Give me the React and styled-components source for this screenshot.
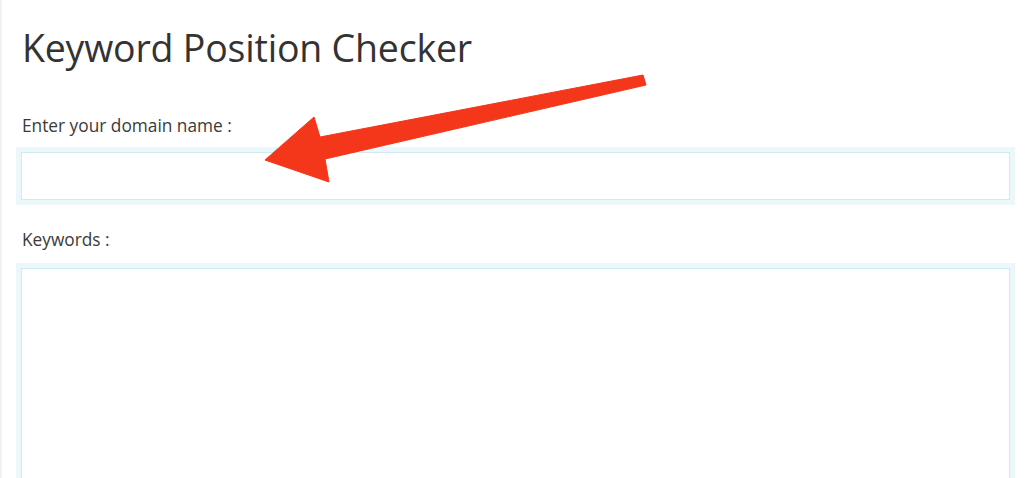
import React from "react";
import styled, { createGlobalStyle } from "styled-components";

const GlobalStyle = createGlobalStyle`
  html, body {
    margin: 0;
    padding: 0;
    background: #fff;
  }
  body {
    font-family: "Open Sans", "Liberation Sans", sans-serif;
    color: #333;
    overflow: hidden;
  }
`;

const Page = styled.div`
  position: relative;
  height: 478px;
  overflow: hidden;
  border-left: 2px solid #f1f1f1;
  padding: 0 19px;
  box-sizing: border-box;
`;

const Title = styled.h1`
  margin: 0;
  padding: 23px 0 0 1px;
  font-size: 37.5px;
  font-weight: 400;
  line-height: 50px;
  color: #333;
  letter-spacing: -0.2px;
`;

const Label = styled.label`
  display: block;
  margin: ${(p) => p.$top}px 0 0 1px;
  font-size: 17.3px;
  line-height: 24px;
  color: #3a3a3a;
`;

const Field = styled.div`
  margin-top: ${(p) => p.$top}px;
  height: ${(p) => p.$height}px;
  border: 1px solid #cfeaf1;
  box-shadow: 0 0 0 5px #ebf7fb;
  background: #fff;
  box-sizing: border-box;
`;

const TextInput = styled.input`
  display: block;
  width: 100%;
  height: 100%;
  border: 0;
  outline: none;
  padding: 0 10px;
  box-sizing: border-box;
  background: transparent;
  font: inherit;
`;

const TextArea = styled.textarea`
  display: block;
  width: 100%;
  height: 100%;
  border: 0;
  outline: none;
  resize: none;
  padding: 10px;
  box-sizing: border-box;
  background: transparent;
  font: inherit;
`;

const Pointer = styled.svg`
  position: absolute;
  left: 0;
  top: 0;
  pointer-events: none;
`;

export default function App() {
  return (
    <>
      <GlobalStyle />
      <Page>
        <Title>Keyword Position Checker</Title>
        <Label $top={41}>Enter your domain name :</Label>
        <Field $top={14} $height={48}>
          <TextInput type="text" />
        </Field>
        <Label $top={28}>Keywords :</Label>
        <Field $top={16} $height={240}>
          <TextArea />
        </Field>
        <Pointer width="1029" height="478" viewBox="0 0 1029 478">
          <polygon
            points="641,75 644,85 323,159 327,182 263,160 312,117 318,137"
            fill="#f4361a"
            stroke="#f4361a"
            strokeWidth="1"
            strokeLinejoin="round"
          />
        </Pointer>
      </Page>
    </>
  );
}
